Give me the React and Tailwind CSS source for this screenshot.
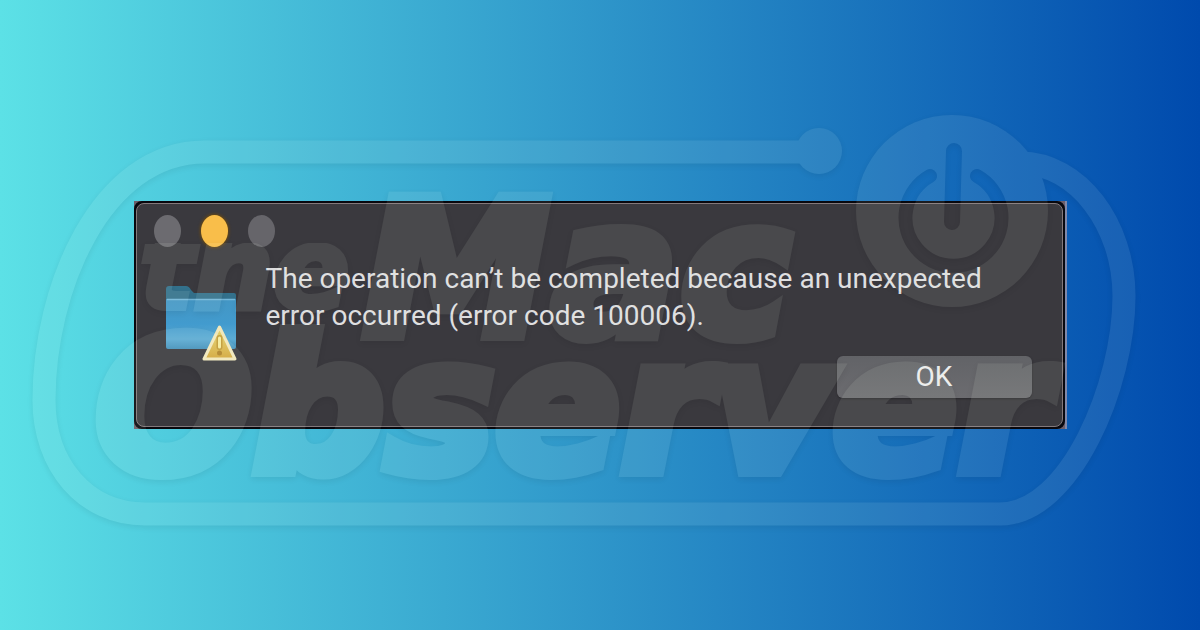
function Watermark() {
  return (
    <svg
      aria-hidden="true"
      viewBox="0 0 1200 630"
      className="pointer-events-none absolute inset-0 h-full w-full opacity-[0.08] drop-shadow-[0_2px_3px_rgba(0,0,0,0.9)]"
    >
      <defs>
        <mask id="power-cutout" maskUnits="userSpaceOnUse" x="840" y="100" width="220" height="220">
          <rect x="840" y="100" width="220" height="220" fill="#fff" />
          <g fill="none" stroke="#000" strokeLinecap="round">
            <path d="M954 151 L952 222" strokeWidth="16" />
            <path d="M930 176 A48 48 0 1 0 977 176" strokeWidth="14" />
          </g>
        </mask>
        <mask id="ring-cutout" maskUnits="userSpaceOnUse" x="0" y="0" width="1200" height="630">
          <rect width="1200" height="630" fill="#fff" />
          <circle cx="952" cy="211" r="95" fill="#000" />
        </mask>
        <clipPath id="article-clip">
          <rect x="130" y="243" width="240" height="80" />
        </clipPath>
      </defs>
      <g fill="#f4ffec" stroke="#f4ffec" strokeWidth="0">
        <g mask="url(#ring-cutout)">
          <path
            d="M819 152 H205 C100 152 44 290 44 400 C44 465 85 514 145 514 H1000 C1070 514 1124 385 1124 296 C1124 225 1078 163 1020 163"
            fill="none"
            strokeWidth="23"
          />
        </g>
        <circle cx="819" cy="151" r="23" />
        <circle cx="952" cy="211" r="96" mask="url(#power-cutout)" />
        <g className="font-['DejaVu_Sans',sans-serif] font-bold italic" strokeLinejoin="miter">
          <text x="140" y="308" fontSize="112" strokeWidth="6" clipPath="url(#article-clip)">the</text>
          <text x="362" y="336" fontSize="190" strokeWidth="10">Mac</text>
          <text x="95" y="471" fontSize="185" strokeWidth="12">Observer</text>
        </g>
      </g>
    </svg>
  );
}

function FolderWarningIcon() {
  return (
    <svg viewBox="0 0 72 76" className="h-[76px] w-[72px] shrink-0" role="img" aria-label="Folder warning">
      <defs>
        <linearGradient id="folder-front" x1="0" y1="0" x2="0" y2="1">
          <stop offset="0" stopColor="#4396c4" />
          <stop offset="0.5" stopColor="#429bce" />
          <stop offset="0.8" stopColor="#5cabd4" />
          <stop offset="1" stopColor="#4491bb" />
        </linearGradient>
        <linearGradient id="warning-fill" x1="0" y1="0" x2="0" y2="1">
          <stop offset="0" stopColor="#e8d873" />
          <stop offset="1" stopColor="#d3a63a" />
        </linearGradient>
      </defs>
      <path d="M0 3 Q0 0 3 0 H20 Q23 0 25 4 L28 7 H68 Q70 7 70 9 V20 H0Z" fill="#33718c" />
      <path d="M0 13 H70 V61 Q70 63 68 63 H2 Q0 63 0 61Z" fill="url(#folder-front)" />
      <path d="M1 13.5 H69" stroke="#74b8da" strokeWidth="1.5" />
      <path
        d="M53.5 41 L69 73 H38Z"
        fill="url(#warning-fill)"
        stroke="#f2e8bb"
        strokeWidth="3"
        strokeLinejoin="round"
      />
      <path d="M53.5 52 V61" stroke="#c19a35" strokeWidth="6" strokeLinecap="round" />
      <path d="M53.5 52 V61" stroke="#f7ec9d" strokeWidth="3" strokeLinecap="round" />
      <circle cx="53.5" cy="67" r="2.5" fill="#b08329" />
    </svg>
  );
}

export default function App() {
  return (
    <main className="relative flex min-h-screen items-center justify-center bg-linear-to-r/srgb from-[#5ce1e6] to-[#004aad] px-8">
      <section
        role="alertdialog"
        aria-labelledby="message"
        className="w-full max-w-[933px] border-r-2 border-[#8088a8] bg-[#6e5f69]"
      >
        <div className="rounded-lg border-2 border-[#08080e] bg-[#08080e]">
          <div className="rounded-lg border border-[#83797b] bg-[#3a393e] pt-[11px] pr-[30px] pb-7 pl-[17px]">
            <div className="flex gap-5">
              <button type="button" aria-label="Close" className="h-8 w-[27px] rounded-[50%] bg-[#6c6b70]" />
              <button
                type="button"
                aria-label="Minimize"
                className="h-8 w-[27px] rounded-[50%] bg-[#f9be4a] shadow-[0_0_3px_1px_#6b4a12]"
              />
              <button type="button" aria-label="Zoom" className="h-8 w-[27px] rounded-[50%] bg-[#66656a]" />
            </div>
            <div className="mt-[13px] flex gap-7 pl-3">
              <div className="pt-[26px]">
                <FolderWarningIcon />
              </div>
              <p id="message" className="font-['Roboto',sans-serif] text-[28px] leading-[37px] text-[#dfdfe0]">
                The operation can’t be completed because an unexpected
                <br />
                error occurred (error code 100006).
              </p>
            </div>
            <div className="-mt-[6px] flex justify-end">
              <button
                type="button"
                className="h-[42px] w-[195px] rounded-md bg-linear-to-b from-[#626367] to-[#6c6c70] font-['Roboto',sans-serif] text-[28px] leading-none text-[#ececec] shadow-[0_1px_2px_#2a292d]"
              >
                OK
              </button>
            </div>
          </div>
        </div>
      </section>
      <Watermark />
    </main>
  );
}
